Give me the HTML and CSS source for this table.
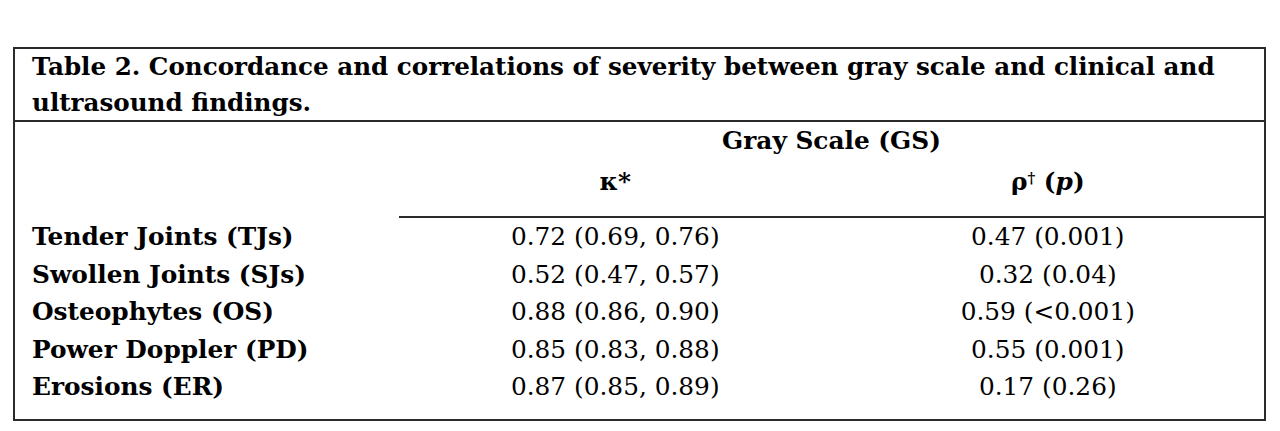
FILE: index.html
```html
<!DOCTYPE html>
<html lang="en">
<head>
<meta charset="utf-8">
<title>Table 2</title>
<link rel="stylesheet" href="styles.css">
</head>
<body>
<div class="box">
  <div class="caption">Table 2. Concordance and correlations of severity between gray scale and clinical and ultrasound findings.</div>
  <table class="data">
    <colgroup>
      <col class="c-label">
      <col class="c-val">
      <col class="c-val">
    </colgroup>
    <thead>
      <tr class="h1">
        <th></th>
        <th colspan="2">Gray Scale (GS)</th>
      </tr>
      <tr class="h2">
        <th></th>
        <th class="ruled">κ*</th>
        <th class="ruled">ρ<span class="dag">†</span> (<i>p</i>)</th>
      </tr>
    </thead>
    <tbody>
      <tr class="first"><th>Tender Joints (TJs)</th><td>0.72 (0.69, 0.76)</td><td>0.47 (0.001)</td></tr>
      <tr><th>Swollen Joints (SJs)</th><td>0.52 (0.47, 0.57)</td><td>0.32 (0.04)</td></tr>
      <tr><th>Osteophytes (OS)</th><td>0.88 (0.86, 0.90)</td><td>0.59 (&lt;0.001)</td></tr>
      <tr><th>Power Doppler (PD)</th><td>0.85 (0.83, 0.88)</td><td>0.55 (0.001)</td></tr>
      <tr class="last"><th>Erosions (ER)</th><td>0.87 (0.85, 0.89)</td><td>0.17 (0.26)</td></tr>
    </tbody>
  </table>
</div>
</body>
</html>
```

FILE: styles.css
```css
html, body {
  margin: 0;
  padding: 0;
  background: #ffffff;
}
body {
  padding: 47px 0 0 13px;
  font-family: "DejaVu Serif", "Liberation Serif", serif;
  color: #000;
}
.box {
  width: 1253px;
  box-sizing: border-box;
  border: 2px solid #2b2b2b;
}
.caption {
  font-weight: bold;
  font-size: 24.6px;
  line-height: 36px;
  height: 71px;
  overflow: visible;
  padding: 0 8px 0 17px;
  border-bottom: 2px solid #2b2b2b;
}
.data {
  width: 100%;
  border-collapse: collapse;
  table-layout: fixed;
  font-size: 24.8px;
}
.c-label { width: 384px; }
.data th, .data td {
  padding: 0;
  font-weight: normal;
  text-align: center;
}
.data thead th {
  font-weight: bold;
}
.h1 th { height: 37px; vertical-align: bottom; line-height: 36px; }
.h2 th { height: 41px; line-height: 36px; vertical-align: bottom; padding-bottom: 16px; }
.h2 th.ruled { border-bottom: 2px solid #2b2b2b; }
.dag { font-size: 0.6em; vertical-align: 0.5em; }
.data tbody th {
  text-align: left;
  font-weight: bold;
  padding-left: 17px;
}
.data tbody th, .data tbody td {
  line-height: 37.5px;
  height: 37.5px;
}
.data tbody tr.first th, .data tbody tr.first td { padding-top: 0; }
.data tbody tr.last th, .data tbody tr.last td { padding-bottom: 13px; }
```
